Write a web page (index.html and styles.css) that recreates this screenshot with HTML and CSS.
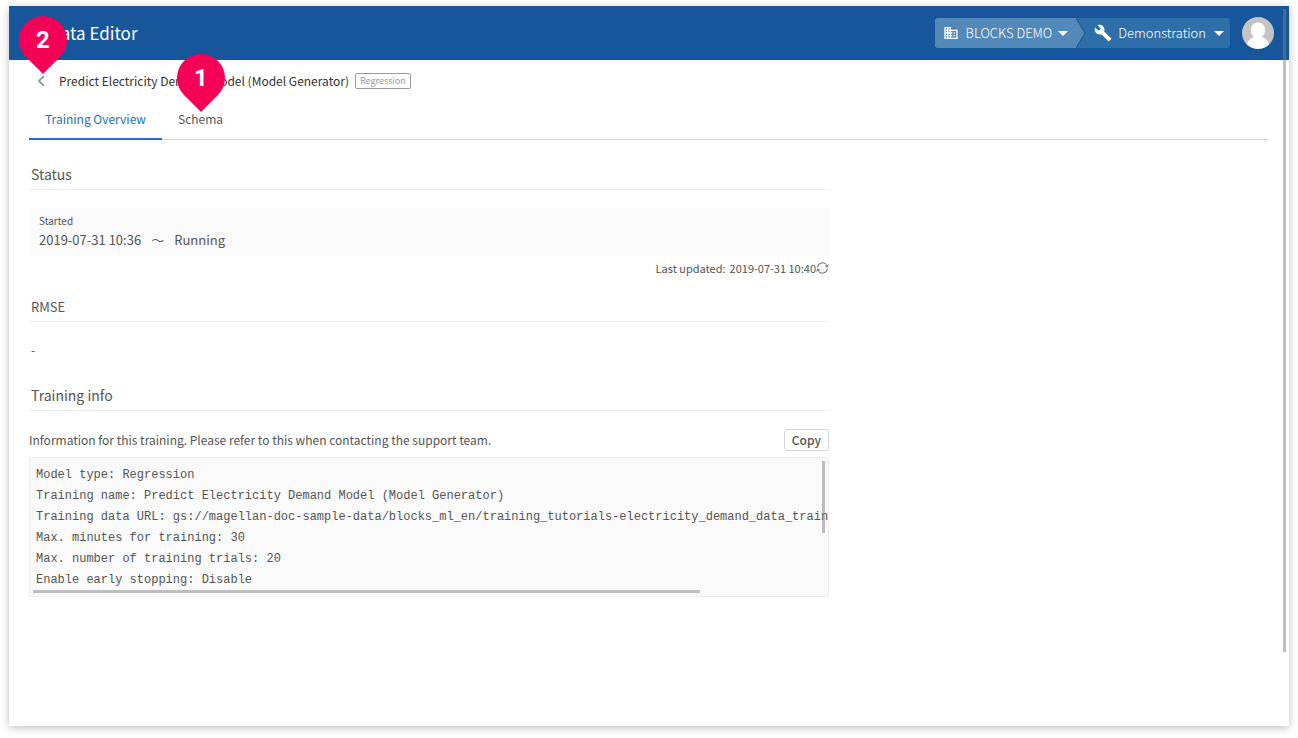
FILE: index.html
```html
<!DOCTYPE html>
<html lang="en">
<head>
  <title>Data Editor</title>
  <meta charset="UTF-8">
  <link rel="stylesheet" href="styles.css">
</head>

<body>
  <div class="window">
    <header class="topbar">
      <h1 class="app-name">Data Editor</h1>
      <div class="switcher">
        <button class="org" type="button">
          <svg width="16" height="16" viewBox="0 0 24 24" fill="#fff"><path d="M12 7V3H2v18h20V7H12zM6 19H4v-2h2v2zm0-4H4v-2h2v2zm0-4H4V9h2v2zm0-4H4V5h2v2zm4 12H8v-2h2v2zm0-4H8v-2h2v2zm0-4H8V9h2v2zm0-4H8V5h2v2zm10 12h-8v-2h2v-2h-2v-2h2v-2h-2V9h8v10zm-2-8h-2v2h2v-2zm0 4h-2v2h2v-2z"/></svg>
          <span>BLOCKS DEMO</span>
          <i class="caret"></i>
        </button>
        <svg class="divider" width="10" height="30" viewBox="0 0 10 30"><path d="M0 0L9 15L0 30z" fill="#5289b9"/><path d="M0 0L9 15L0 30" fill="none" stroke="#17569b"/></svg>
        <button class="project" type="button">
          <svg width="18" height="18" viewBox="0 0 24 24" fill="#fff"><path d="M22.700 19l-9.100-9.100c.9-2.300.4-5-1.500-6.900-2-2-5-2.400-7.400-1.300L9 6 6 9 1.600 4.700C.4 7.100.9 10.100 2.900 12.100c1.900 1.900 4.600 2.400 6.900 1.500l9.100 9.100c.4.4 1 .4 1.400 0l2.300-2.300c.5-.4.5-1.100.1-1.400z"/></svg>
          <span>Demonstration</span>
          <i class="caret"></i>
        </button>
      </div>
      <button class="avatar" type="button" aria-label="Account">
        <svg width="32" height="32" viewBox="0 0 32 32"><circle cx="16" cy="16" r="16" fill="#c4c4c4"/><path d="M16 5.500c-4.300 0-7.200 3.200-7.200 7.500 0 3 1.300 5.400 3.300 6.700C8 21.200 5.500 24.500 4.800 27.300A16 16 0 0 0 27.200 27.300C26.500 24.500 24 21.200 19.900 19.700c2-1.300 3.300-3.700 3.300-6.700 0-4.300-2.900-7.500-7.200-7.500z" fill="#fff"/></svg>
      </button>
    </header>

    <main class="page">
      <div class="model">
        <button class="back" type="button" aria-label="Back">
          <svg width="8" height="12" viewBox="0 0 8 12"><path d="M7 1L2 6L7 11" fill="none" stroke="#90a4ae" stroke-width="2"/></svg>
          <span class="pin"><b>2</b></span>
        </button>
        <h2 class="model-name">Predict Electricity Demand Model (Model Generator)</h2>
        <span class="tag">Regression</span>
      </div>

      <nav class="tabs">
        <a class="tab active" href="#overview">Training Overview</a>
        <a class="tab" href="#schema">Schema<span class="pin"><b>1</b></span></a>
      </nav>

      <div class="content" id="overview">
        <section class="section">
          <h3>Status</h3>
          <div class="status">
            <div class="label">Started</div>
            <div class="time"><span>2019-07-31 10:36</span><span>～</span><span>Running</span></div>
          </div>
          <div class="updated">
            <span>Last updated:</span><span>2019-07-31 10:40</span>
            <button class="refresh" type="button" aria-label="Refresh">
              <svg width="13" height="12" viewBox="0 0 13 12" fill="none" stroke="#666"><path d="M1.500 5.500A5 5 0 0 1 11.200 4.200M11.500 6.500A5 5 0 0 1 1.800 7.800M12.300 2.500L11.400 4.700L9.200 4M.7 9.500L1.600 7.300L3.800 8"/></svg>
            </button>
          </div>
        </section>

        <section class="section">
          <h3 class="metric">RMSE</h3>
          <p class="value">-</p>
        </section>

        <section class="section">
          <h3>Training info</h3>
          <div class="info-head">
            <p>Information for this training. Please refer to this when contacting the support team.</p>
            <button class="copy" type="button">Copy</button>
          </div>
          <div class="info-box">
<pre class="info">Model type: Regression
Training name: Predict Electricity Demand Model (Model Generator)
Training data URL: gs://magellan-doc-sample-data/blocks_ml_en/training_tutorials-electricity_demand_data_train
Max. minutes for training: 30
Max. number of training trials: 20
Enable early stopping: Disable
</pre>
            <i class="bar-x"></i>
            <i class="bar-y"></i>
          </div>
        </section>
      </div>
    </main>
    <i class="page-bar"></i>
  </div>
</body>
</html>
```
FILE: styles.css
```css
* {
  box-sizing: border-box;
}
body {
  margin: 0;
  padding: 6px 9px 12px;
  font-family: "Noto Sans CJK JP", sans-serif;
  font-size: 12px;
  line-height: 20px;
  color: #555;
  background-color: #fff;
}
h1, h2, h3, p, pre {
  margin: 0;
  font-weight: normal;
}
button {
  font: inherit;
  color: inherit;
  border: none;
  background: none;
  padding: 0;
  cursor: pointer;
}
svg {
  display: block;
}
.window {
  position: relative;
  min-height: calc(100vh - 18px);
  background-color: #fff;
  box-shadow: 0 2px 8px rgba(0,0,0,0.25);
}

/* header */
.topbar {
  display: flex;
  align-items: center;
  height: 54px;
  padding: 0 15px 0 40px;
  background-color: #17569b;
  color: #fff;
}
.app-name {
  flex: 1;
  font-size: 17px;
}
.switcher {
  display: flex;
  height: 30px;
  margin-right: 12px;
  border-radius: 3px;
  overflow: hidden;
  background-color: #2e6ea9;
  font-size: 13px;
  font-weight: 300;
}
.org, .project {
  display: flex;
  align-items: center;
  padding: 0 8px;
}
.org {
  background-color: #5289b9;
}
.project {
  padding: 0 6px 0 8px;
}
.org span {
  margin: 0 6px 0 7px;
}
.project span {
  margin: 0 8px 0 6px;
}
.caret {
  border: 5px solid transparent;
  border-top-color: #fff;
  border-bottom: none;
}

/* model name and tabs */
.page {
  padding: 11px 20px 20px;
}
.model {
  display: flex;
  align-items: center;
  height: 20px;
}
.back {
  position: relative;
  width: 28px;
  padding-left: 8px;
}
.model-name {
  margin: 0 6px 0 2px;
  font-size: 12px;
  color: #333;
}
.tag {
  padding: 0 4px;
  border: 1px solid #999;
  border-radius: 2px;
  font-size: 9px;
  line-height: 14px;
  color: #999;
}
.tabs {
  display: flex;
  margin-top: 8px;
  border-bottom: 1px solid #d5d5d5;
}
.tab {
  position: relative;
  height: 41px;
  margin-bottom: -1px;
  padding: 10px 16px;
  color: #555;
  text-decoration: none;
}
.tab.active {
  color: #1b75bc;
  border-bottom: 2px solid #1b75bc;
}

/* numbered markers, the tip points at the parent */
.pin {
  position: absolute;
  left: 50%;
  bottom: 100%;
  width: 48px;
  height: 48px;
  margin: 0 0 11px -24px;
  border-radius: 50% 50% 0 50%;
  background-color: #f50057;
  transform: rotate(45deg);
}
.pin b {
  display: block;
  font: bold 24px/48px Roboto, sans-serif;
  color: #fff;
  text-align: center;
  transform: rotate(-45deg);
}
.tab .pin {
  margin-bottom: -3px;
}

/* overview */
.content {
  max-width: 800px;
  padding-top: 8px;
}
.section {
  padding-top: 16px;
}
.section h3 {
  padding: 0 2px 4px;
  border-bottom: 1px solid #eee;
  font-size: 14px;
  line-height: 21px;
}
.section .metric {
  font-size: 13px;
}
.status {
  margin-top: 18px;
  padding: 4px 10px 6px;
  border-radius: 3px;
  background-color: #fafafa;
}
.label {
  font-size: 10px;
  line-height: 18px;
}
.time {
  display: flex;
  gap: 10px;
  font-size: 13px;
}
.updated {
  display: flex;
  justify-content: flex-end;
  align-items: center;
  height: 24px;
  font-size: 11px;
}
.updated span + span {
  margin-left: 4px;
}
.value {
  padding: 18px 2px 9px;
}
.info-head {
  display: flex;
  justify-content: space-between;
  align-items: center;
  margin: 18px 0 6px;
}
.copy {
  padding: 0 7px;
  border: 1px solid #d5d5d5;
  border-radius: 3px;
  font-weight: 500;
}
.info-box {
  position: relative;
  border: 1px solid #eee;
  border-radius: 2px;
  background-color: #fafafa;
}
.info {
  height: 138px;
  padding: 7px 0 0 6px;
  overflow: auto;
  scrollbar-width: none;
  font-family: "Liberation Mono", monospace;
  font-size: 12px;
  line-height: 21px;
}
.bar-x, .bar-y, .page-bar {
  position: absolute;
  background-color: rgba(128,128,128,0.5);
}
.bar-x {
  left: 3px;
  bottom: 3px;
  width: 667px;
  height: 3px;
}
.bar-y {
  right: 3px;
  top: 3px;
  width: 3px;
  height: 72px;
}
.page-bar {
  right: 3px;
  top: 3px;
  width: 3px;
  height: 643px;
}
```
